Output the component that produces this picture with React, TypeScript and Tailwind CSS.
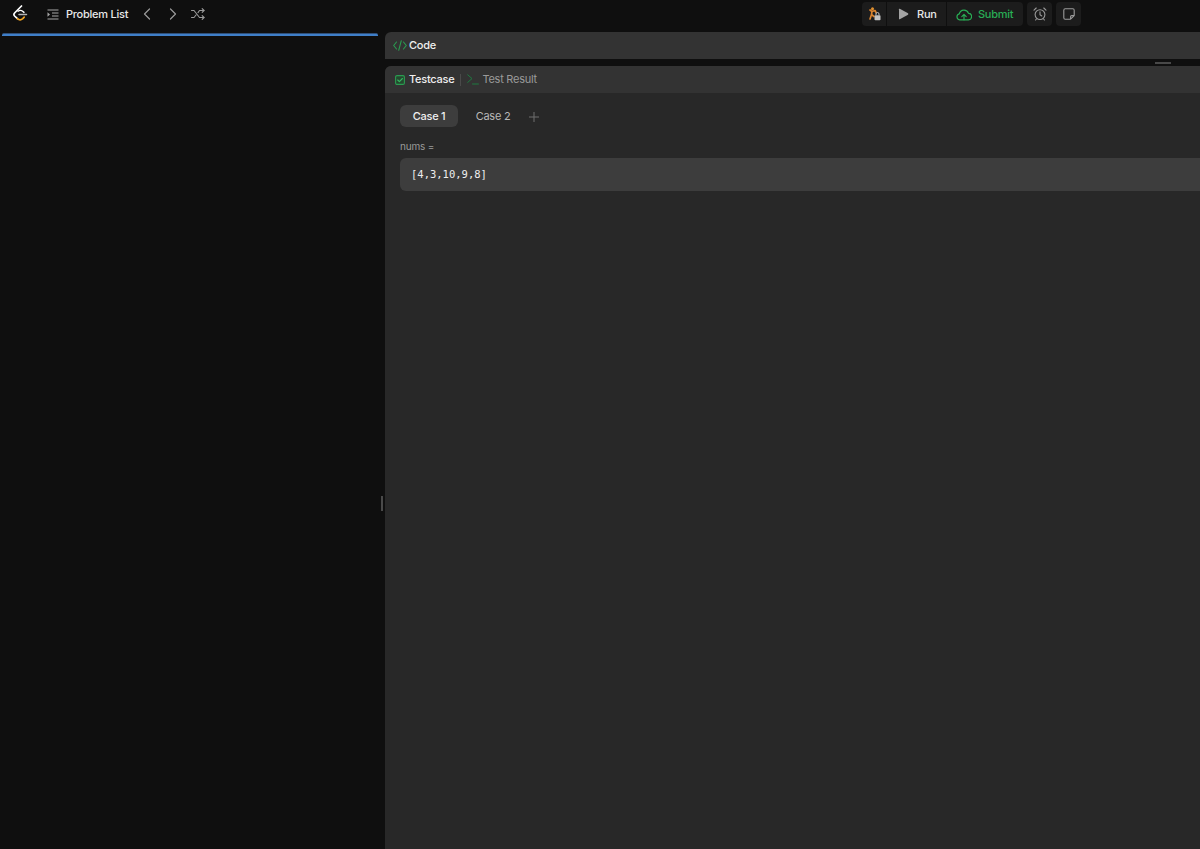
import React from "react";

function Logo() {
  return (
    <svg width="16" height="18" viewBox="0 0 16 18" fill="none">
      <path d="M9.5 1 L2.6 8 Q1.2 9.5 2.6 11 L5.4 13.6" stroke="#ffffff" strokeWidth="1.7" strokeLinecap="round" />
      <path d="M5.4 13.6 Q8 16 10.8 13.6 L12.2 12.2" stroke="#f5a623" strokeWidth="1.7" strokeLinecap="round" />
      <path d="M7 9.6 H14.5" stroke="#b3b3b3" strokeWidth="1.5" strokeLinecap="round" />
      <path d="M6 6.2 Q8.2 4.6 10.4 6 L12 7.4" stroke="#ffffff" strokeWidth="1.4" strokeLinecap="round" />
    </svg>
  );
}

function ListIcon() {
  return (
    <svg width="12" height="11" viewBox="0 0 12 11" fill="none" stroke="#a8a8a8" strokeWidth="1.1">
      <path d="M0.5 1H11.5M5 4H11.5M5 7H11.5M0.5 10H11.5" />
      <path d="M0.5 3.2 L3 5.5 L0.5 7.8Z" fill="#a8a8a8" stroke="none" />
    </svg>
  );
}

function Chevron({ dir }: { dir: "l" | "r" }) {
  return (
    <svg width="8" height="12" viewBox="0 0 8 12" fill="none" stroke="#9a9a9a" strokeWidth="1.2" strokeLinecap="round" strokeLinejoin="round">
      <path d={dir === "l" ? "M6.5 1 L1.5 6 L6.5 11" : "M1.5 1 L6.5 6 L1.5 11"} />
    </svg>
  );
}

function Shuffle() {
  return (
    <svg width="14" height="12" viewBox="0 0 14 12" fill="none" stroke="#9a9a9a" strokeWidth="1.1" strokeLinecap="round" strokeLinejoin="round">
      <path d="M0.5 2.5H3L8.5 9.5H13M0.5 9.5H3L5 7M7 4.6L8.5 2.5H13" />
      <path d="M11.2 0.7 L13 2.5 L11.2 4.3M11.2 7.7 L13 9.5 L11.2 11.3" />
    </svg>
  );
}

function Debug() {
  return (
    <svg width="13" height="14" viewBox="0 0 13 14" fill="none">
      <path d="M2 3 L4 4.5 L3.5 7.5 L6 9.5 M3.5 7.5 L2 12 M4 4.5 L7 3.5 L8 5.5" stroke="#d9832f" strokeWidth="1.7" strokeLinecap="round" strokeLinejoin="round" />
      <circle cx="4.5" cy="1.8" r="1.5" fill="#e0902f" />
      <rect x="6.5" y="8.2" width="6" height="5" rx="0.8" fill="#c4c4c4" />
      <path d="M8 8.2V7a1.5 1.5 0 0 1 3 0V8.2" stroke="#c4c4c4" strokeWidth="1" />
    </svg>
  );
}

function Play() {
  return (
    <svg width="11" height="12" viewBox="0 0 11 12">
      <path d="M1 1.2 Q1 0.4 1.8 0.8 L10 5.3 Q10.8 6 10 6.7 L1.8 11.2 Q1 11.6 1 10.8Z" fill="#a3a3a3" />
    </svg>
  );
}

function CloudUp() {
  return (
    <svg width="16" height="13" viewBox="0 0 16 13" fill="none" stroke="#29ad55" strokeWidth="1.2" strokeLinecap="round" strokeLinejoin="round">
      <path d="M4 11.8H3.6A3 3 0 0 1 3.3 5.9 4.8 4.8 0 0 1 12.5 5.4 3.2 3.2 0 0 1 12.3 11.8H4" />
      <path d="M8 11.8V6.6M5.8 8.6 L8 6.4 L10.2 8.6" />
    </svg>
  );
}

function Alarm() {
  return (
    <svg width="14" height="14" viewBox="0 0 14 14" fill="none" stroke="#9a9a9a" strokeWidth="1.1" strokeLinecap="round" strokeLinejoin="round">
      <circle cx="7" cy="7.6" r="4.9" />
      <path d="M7 4.8V7.8L8.8 9M1 3.2 L3.2 1M13 3.2 L10.8 1M3.4 12 L2.6 13M10.6 12 L11.4 13" />
    </svg>
  );
}

function Note() {
  return (
    <svg width="12" height="12" viewBox="0 0 12 12" fill="none" stroke="#9a9a9a" strokeWidth="1.1" strokeLinejoin="round">
      <path d="M2.2 0.8H9.8A1.4 1.4 0 0 1 11.2 2.2V7.6L7.6 11.2H2.2A1.4 1.4 0 0 1 0.8 9.8V2.2A1.4 1.4 0 0 1 2.2 0.8Z" />
      <path d="M11 7.6H8.6A1 1 0 0 0 7.6 8.6V11" />
    </svg>
  );
}

function CodeIcon() {
  return (
    <svg width="14" height="11" viewBox="0 0 14 11" fill="none" stroke="#2a9c50" strokeWidth="1.1" strokeLinecap="round" strokeLinejoin="round">
      <path d="M3.5 2 L0.7 5.5 L3.5 9M10.5 2 L13.3 5.5 L10.5 9M8.3 0.7 L5.7 10.3" />
    </svg>
  );
}

function CheckBox() {
  return (
    <svg width="10" height="10" viewBox="0 0 10 10" fill="none">
      <rect x="0.6" y="0.6" width="8.8" height="8.8" rx="1.4" fill="#25482f" stroke="#2a9c50" strokeWidth="1.1" />
      <path d="M2.7 5 L4.4 6.7 L7.4 3.5" stroke="#35b862" strokeWidth="1.1" strokeLinecap="round" strokeLinejoin="round" />
    </svg>
  );
}

function Terminal() {
  return (
    <svg width="12" height="11" viewBox="0 0 12 11" fill="none" stroke="#1f7a40" strokeWidth="1" strokeLinecap="round" strokeLinejoin="round">
      <path d="M0.7 0.8 L5 4.6 L0.7 8.4M5.5 10H11.4" />
    </svg>
  );
}

function Plus() {
  return (
    <svg width="10" height="10" viewBox="0 0 10 10" fill="none" stroke="#6e6e6e" strokeWidth="1">
      <path d="M5 0V10M0 5H10" />
    </svg>
  );
}

export default function App() {
  return (
    <div className="flex h-[849px] w-[1200px] flex-col overflow-hidden bg-[#0f0f0f] font-['Inter',sans-serif]">
      <header className="flex h-[32px] w-[1200px] shrink-0 items-start justify-between pr-[119px] pt-[2px]">
        <nav className="flex h-[24px] items-center">
          <div className="ml-[12px] flex w-[16px] items-center"><Logo /></div>
          <div className="ml-[19px]"><ListIcon /></div>
          <span className="ml-[7px] text-[11px] font-medium tracking-[-0.25px] text-[#e8e8e8]">Problem List</span>
          <div className="ml-[15px]"><Chevron dir="l" /></div>
          <div className="ml-[18px]"><Chevron dir="r" /></div>
          <div className="ml-[14px]"><Shuffle /></div>
        </nav>
        <div className="flex h-[24px] items-center gap-[4px]">
          <div className="flex h-[24px] w-[161px] overflow-hidden rounded-[4px] bg-[#1c1c1c]">
            <div className="flex w-[25px] items-center justify-center border-r border-[#0f0f0f]"><Debug /></div>
            <div className="flex w-[60px] items-center gap-[8px] border-r border-[#0f0f0f] pl-[11px]">
              <Play />
              <span className="text-[11px] font-medium tracking-[-0.25px] text-[#e8e8e8]">Run</span>
            </div>
            <div className="flex flex-1 items-center gap-[6px] pl-[9px]">
              <CloudUp />
              <span className="text-[11px] font-medium tracking-[-0.25px] text-[#29ad55]">Submit</span>
            </div>
          </div>
          <div className="flex h-[24px] w-[25px] items-center justify-center rounded-[4px] bg-[#1c1c1c]"><Alarm /></div>
          <div className="flex h-[24px] w-[25px] items-center justify-center rounded-[4px] bg-[#1c1c1c]"><Note /></div>
        </div>
      </header>

      <main className="flex min-h-0 flex-1">
        <section className="w-[379px] shrink-0 pl-[2px] pr-[1px] pt-[1px]">
          <div className="h-[3px] rounded-t-[2px] border-t border-[#2f4f78] bg-[#3f7fc9]" />
        </section>

        <div className="flex w-[6px] shrink-0 justify-center pt-[464px]">
          <div className="h-[15px] w-[2px] bg-[#4a4a4a]" />
        </div>

        <section className="flex w-[1555px] shrink-0 flex-col">
          <div className="flex h-[27px] shrink-0 items-center gap-[2px] rounded-t-[6px] bg-[#333333] pl-[8px]">
            <CodeIcon />
            <span className="text-[11px] font-medium tracking-[-0.25px] text-[#efefef]">Code</span>
          </div>
          <div className="flex h-[7px] shrink-0 items-center justify-center">
            <div className="h-[2px] w-[16px] bg-[#484848]" />
          </div>
          <div className="flex min-h-0 flex-1 flex-col rounded-t-[6px] bg-[#282828]">
            <div className="flex h-[27px] shrink-0 items-center rounded-t-[6px] bg-[#333333] pl-[10px]">
              <CheckBox />
              <span className="ml-[4px] text-[11px] font-medium tracking-[-0.25px] text-[#efefef]">Testcase</span>
              <div className="ml-[6px] h-[12px] w-px bg-[#4a4a4a]" />
              <div className="ml-[6px]"><Terminal /></div>
              <span className="ml-[3px] text-[11px] tracking-[-0.25px] text-[#9a9a9a]">Test Result</span>
            </div>
            <div className="px-[15px] pt-[12px]">
              <div className="flex items-center">
                <div className="flex h-[22px] w-[58px] items-center justify-center rounded-[6px] bg-[#3d3d3d] pt-[1px] text-[11px] font-medium tracking-[-0.25px] text-[#efefef]">Case 1</div>
                <div className="flex h-[22px] w-[70px] items-center justify-center pt-[1px] text-[11px] tracking-[-0.25px] text-[#b8b8b8]">Case 2</div>
                <div className="ml-[1px] mt-[1px]"><Plus /></div>
              </div>
              <div className="mt-[12px] text-[10px] leading-[14px] tracking-[-0.2px] text-[#9a9a9a]">nums =</div>
              <div className="mt-[5px] flex h-[33px] items-center rounded-[6px] bg-[#3d3d3d] pl-[11px] font-['DejaVu_Sans_Mono',monospace] text-[10.5px] text-[#eeeeee]">[4,3,10,9,8]</div>
            </div>
          </div>
        </section>
      </main>
    </div>
  );
}
